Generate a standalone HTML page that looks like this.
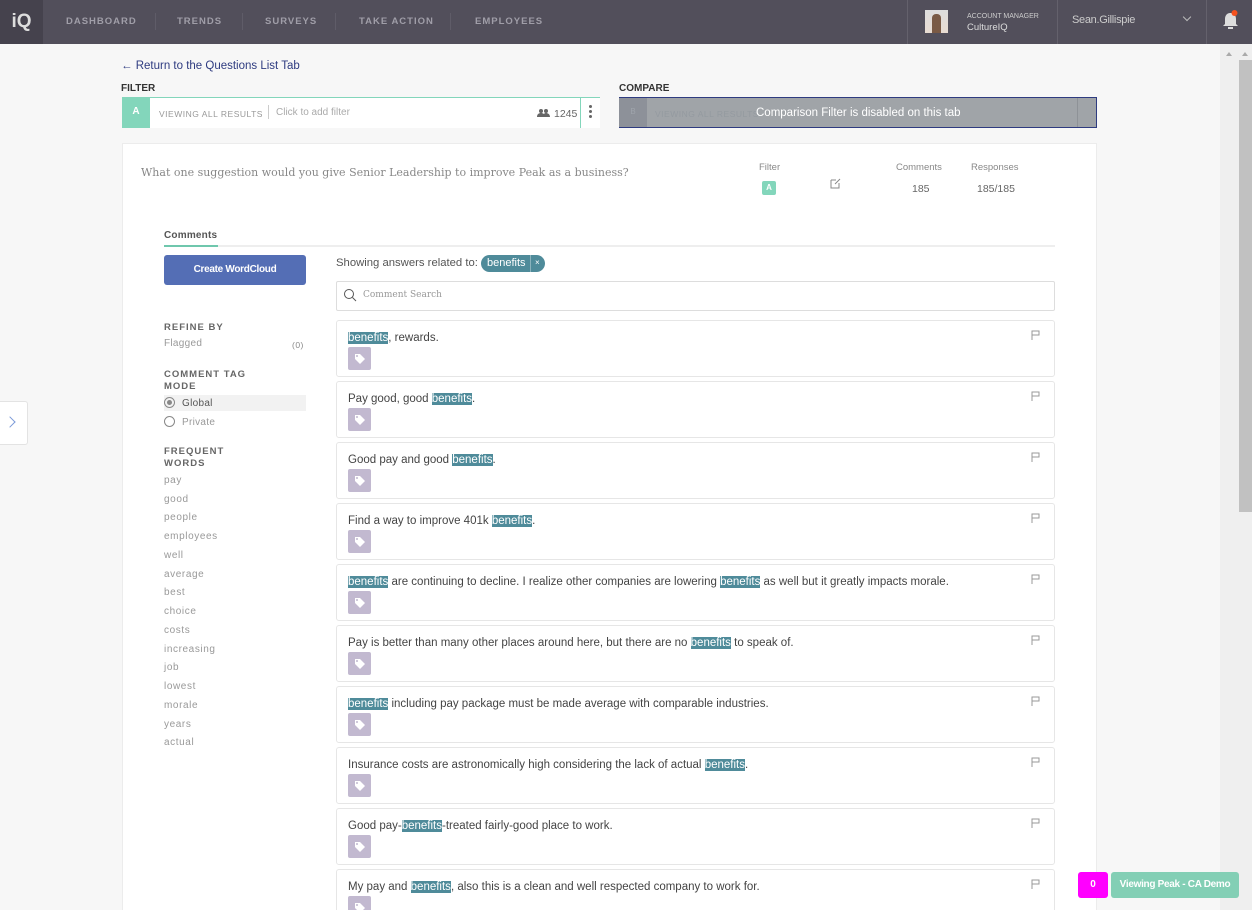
<!DOCTYPE html>
<html style="width:1252px;height:910px;overflow:hidden"><head><meta charset="utf-8"><style>
*{box-sizing:border-box;margin:0;padding:0}
body{width:1252px;height:910px;overflow:hidden;background:#f7f7f7;font-family:"Liberation Sans",sans-serif;position:relative;color:#444}
.abs{position:absolute}
.nav{left:0;top:0;width:1252px;height:44px;background:#524f5b}
.logo{left:0;top:0;width:43px;height:44px;background:#45424d;color:#ddd;font-weight:bold;font-size:19px;line-height:44px;text-align:center}
.nv{top:1px;height:44px;line-height:42px;font-size:9.5px;letter-spacing:1px;color:#a09ea8;font-weight:bold}
.sep{top:13px;width:1px;height:17px;background:#5f5c68}
.vsep{top:0;width:1px;height:44px;background:#64616c}
.card{background:#fff;border:1px solid #e6e6e6;border-radius:3px}
.hl{background:#4f8b9a;color:#fff}
.tag{width:23px;height:23px;background:#c2b9d0;border-radius:2px}
.fw{font-size:10px;color:#999;letter-spacing:.6px;left:164px}
</style></head><body>
<div class="abs nav"></div>
<div class="abs logo">iQ</div>
<div class="abs nv" style="left:66px">DASHBOARD</div>
<div class="abs sep" style="left:155px"></div>
<div class="abs nv" style="left:177px">TRENDS</div>
<div class="abs sep" style="left:242px"></div>
<div class="abs nv" style="left:265px">SURVEYS</div>
<div class="abs sep" style="left:335px"></div>
<div class="abs nv" style="left:359px">TAKE ACTION</div>
<div class="abs sep" style="left:450px"></div>
<div class="abs nv" style="left:475px">EMPLOYEES</div>
<div class="abs vsep" style="left:907px"></div>
<div class="abs" style="left:925px;top:10px;width:23px;height:23px;background:linear-gradient(#ddd,#e8dcd2);"><div style="margin:4px auto 0;width:9px;height:19px;background:#7a5a45;border-radius:4px 4px 0 0"></div></div>
<div class="abs" style="left:967px;top:13px;font-size:7px;color:#ccc">ACCOUNT MANAGER</div>
<div class="abs" style="left:967px;top:22px;font-size:9.5px;color:#ddd">CultureIQ</div>
<div class="abs vsep" style="left:1057px"></div>
<div class="abs" style="left:1072px;top:14px;font-size:11px;color:#ccc;letter-spacing:-.3px">Sean.Gillispie</div>
<div class="abs" style="left:1184px;top:14px;width:6px;height:6px;border-right:1px solid #bbb;border-bottom:1px solid #bbb;transform:rotate(45deg)"></div>
<div class="abs vsep" style="left:1206px"></div>
<svg class="abs" style="left:1221px;top:10px" width="20" height="22" viewBox="0 0 20 22"><path d="M9 3c-3 0-5 2.5-5 6v5l-2 2h15l-2-2V9c0-3.5-2-6-5-6z" fill="#ddd"/><rect x="7" y="17" width="5" height="2" fill="#ddd"/><circle cx="13.5" cy="3" r="3" fill="#f4511e"/></svg>
<div class="abs" style="left:1220px;top:44px;width:32px;height:866px;background:#efefef"></div>
<div class="abs" style="left:1239px;top:60px;width:13px;height:452px;background:#c1c1c1"></div>
<div class="abs" style="left:1226px;top:49px;border:3px solid transparent;border-bottom:4px solid #aaa"></div>
<div class="abs" style="left:1242px;top:49px;border:3px solid transparent;border-bottom:4px solid #aaa"></div>

<div class="abs" style="left:121px;top:60px;font-size:11.5px;color:#2e3b80">&#8592; Return to the Questions List Tab</div>
<div class="abs" style="left:121px;top:83px;font-size:10px;font-weight:bold;color:#333">FILTER</div>
<div class="abs" style="left:122px;top:97px;width:478px;height:31px;background:#fff;border-top:1px solid #83d6bb"></div>
<div class="abs" style="left:122px;top:97px;width:28px;height:31px;background:#83d6bb;color:#fff;font-size:10px;font-weight:bold;text-align:center;line-height:30px">A</div>
<div class="abs" style="left:159px;top:109px;font-size:8.5px;color:#999;letter-spacing:.5px">VIEWING ALL RESULTS</div>
<div class="abs" style="left:268px;top:105px;width:1px;height:14px;background:#ccc"></div>
<div class="abs" style="left:276px;top:107px;font-size:10px;color:#aaa">Click to add filter</div>
<svg class="abs" style="left:537px;top:109px" width="13" height="8" viewBox="0 0 13 8"><circle cx="4" cy="2" r="2" fill="#666"/><circle cx="9" cy="2" r="2" fill="#666"/><path d="M0 8c0-3 2-4 4-4s4 1 4 4zM6 8c0-3 1.5-4 3-4s4 1 4 4z" fill="#666"/></svg>
<div class="abs" style="left:554px;top:108px;font-size:10.5px;color:#666">1245</div>
<div class="abs" style="left:580px;top:97px;width:1px;height:31px;background:#83d6bb"></div>
<div class="abs" style="left:589px;top:105px;width:3px;height:3px;border-radius:50%;background:#666;box-shadow:0 5px 0 #666,0 10px 0 #666"></div>

<div class="abs" style="left:619px;top:83px;font-size:10px;font-weight:bold;color:#333">COMPARE</div>
<div class="abs" style="left:619px;top:97px;width:478px;height:31px;background:#a0a4a8;border:1px solid #2e3b80;border-left:none"></div>
<div class="abs" style="left:619px;top:98px;width:28px;height:29px;background:#8d9199;color:#9fa4ab;font-size:8px;text-align:center;line-height:28px">B</div>
<div class="abs" style="left:655px;top:109px;font-size:8.5px;color:#949aa0;letter-spacing:.5px">VIEWING ALL RESULTS</div>
<div class="abs" style="left:756px;top:107px;font-size:11.5px;color:#fff">Comparison Filter is disabled on this tab</div>
<div class="abs" style="left:1077px;top:98px;width:1px;height:29px;background:#8e9297"></div>

<div class="abs" style="left:122px;top:143px;width:975px;height:767px;background:#fff;border:1px solid #ececec;border-bottom:none"></div>
<div class="abs" style="left:141px;top:166px;font-family:'DejaVu Serif',serif;font-size:11px;color:#888">What one suggestion would you give Senior Leadership to improve Peak as a business?</div>
<div class="abs" style="left:759px;top:162px;font-size:9.5px;color:#888">Filter</div>
<div class="abs" style="left:762px;top:181px;width:14px;height:14px;background:#83d6bb;border-radius:2px;color:#fff;font-size:8px;font-weight:bold;text-align:center;line-height:14px">A</div>
<svg class="abs" style="left:830px;top:178px" width="11" height="11" viewBox="0 0 11 11"><path d="M1 2h5M1 2v8h8V5M5 6l5-5" stroke="#888" fill="none" stroke-width="1"/></svg>
<div class="abs" style="left:896px;top:162px;font-size:9.5px;color:#888">Comments</div>
<div class="abs" style="left:912px;top:183px;font-size:10.5px;color:#666">185</div>
<div class="abs" style="left:971px;top:162px;font-size:9.5px;color:#888">Responses</div>
<div class="abs" style="left:977px;top:183px;font-size:10.5px;color:#666">185/185</div>

<div class="abs" style="left:164px;top:230px;font-size:10px;color:#555;font-weight:bold;letter-spacing:.2px">Comments</div>
<div class="abs" style="left:164px;top:245px;width:891px;height:2px;background:#eee"></div>
<div class="abs" style="left:164px;top:245px;width:54px;height:2px;background:#6fc7ad"></div>
<div class="abs" style="left:164px;top:255px;width:142px;height:30px;background:#546eb5;border-radius:3px;color:#fff;font-size:10px;font-weight:bold;text-align:center;line-height:30px;letter-spacing:-.3px">Create WordCloud</div>
<div class="abs" style="left:164px;top:322px;font-size:9.5px;color:#666;font-weight:bold;letter-spacing:1px">REFINE BY</div>
<div class="abs" style="left:164px;top:338px;font-size:10px;color:#999;letter-spacing:.3px">Flagged</div>
<div class="abs" style="left:292px;top:340px;font-size:8.5px;color:#888;letter-spacing:.5px">(0)</div>
<div class="abs" style="left:164px;top:369px;font-size:9.5px;color:#666;font-weight:bold;letter-spacing:1px;line-height:12px">COMMENT TAG<br>MODE</div>
<div class="abs" style="left:164px;top:395px;width:142px;height:16px;background:#f2f2f2"></div>
<div class="abs" style="left:164px;top:397px;width:11px;height:11px;border:1px solid #888;border-radius:50%"><div style="margin:2px;width:5px;height:5px;border-radius:50%;background:#888"></div></div>
<div class="abs" style="left:182px;top:398px;font-size:10px;color:#555;letter-spacing:.3px">Global</div>
<div class="abs" style="left:164px;top:416px;width:11px;height:11px;border:1px solid #888;border-radius:50%"></div>
<div class="abs" style="left:182px;top:417px;font-size:10px;color:#999;letter-spacing:.3px">Private</div>
<div class="abs" style="left:164px;top:446px;font-size:9.5px;color:#666;font-weight:bold;letter-spacing:1px;line-height:12px">FREQUENT<br>WORDS</div>
<div class="abs fw" style="top:475px">pay</div>
<div class="abs fw" style="top:494px">good</div>
<div class="abs fw" style="top:512px">people</div>
<div class="abs fw" style="top:531px">employees</div>
<div class="abs fw" style="top:550px">well</div>
<div class="abs fw" style="top:569px">average</div>
<div class="abs fw" style="top:587px">best</div>
<div class="abs fw" style="top:606px">choice</div>
<div class="abs fw" style="top:625px">costs</div>
<div class="abs fw" style="top:644px">increasing</div>
<div class="abs fw" style="top:662px">job</div>
<div class="abs fw" style="top:681px">lowest</div>
<div class="abs fw" style="top:700px">morale</div>
<div class="abs fw" style="top:719px">years</div>
<div class="abs fw" style="top:737px">actual</div>

<div class="abs" style="left:336px;top:257px;font-size:11.3px;color:#555">Showing answers related to:</div>
<div class="abs" style="left:481px;top:255px;width:64px;height:17px;background:#4f8b9a;border-radius:9px;color:#fff;font-size:11px;line-height:16px;padding-left:6px">benefits<span style="position:absolute;left:49px;top:0;height:17px;border-left:1px solid #8bb3bd;padding-left:4px;font-size:8px">×</span></div>
<div class="abs" style="left:336px;top:281px;width:719px;height:30px;border:1px solid #ddd;border-radius:2px;background:#fff"></div>
<svg class="abs" style="left:343px;top:288px" width="14" height="14" viewBox="0 0 14 14"><circle cx="6" cy="6" r="4.5" stroke="#555" fill="none"/><path d="M9.5 9.5l3.5 3.5" stroke="#555"/></svg>
<div class="abs" style="left:363px;top:290px;font-size:9px;color:#999;font-family:'DejaVu Serif',serif">Comment Search</div>

<div id="cards"></div>
<script>
var t=[
'<b class="hl">benefits</b>, rewards.',
'Pay good, good <b class="hl">benefits</b>.',
'Good pay and good <b class="hl">benefits</b>.',
'Find a way to improve 401k <b class="hl">benefits</b>.',
'<b class="hl">benefits</b> are continuing to decline. I realize other companies are lowering <b class="hl">benefits</b> as well but it greatly impacts morale.',
'Pay is better than many other places around here, but there are no <b class="hl">benefits</b> to speak of.',
'<b class="hl">benefits</b> including pay package must be made average with comparable industries.',
'Insurance costs are astronomically high considering the lack of actual <b class="hl">benefits</b>.',
'Good pay-<b class="hl">benefits</b>-treated fairly-good place to work.',
'My pay and <b class="hl">benefits</b>, also this is a clean and well respected company to work for.'];
var h='';
for(var i=0;i<t.length;i++){var y=320+i*61;
h+='<div class="abs card" style="left:336px;top:'+y+'px;width:719px;height:57px"></div>'+
'<div class="abs" style="left:348px;top:'+(y+11)+'px;font-size:11.5px;color:#444;white-space:nowrap;line-height:14px">'+t[i].replace(/<b /g,'<span ').replace(/<\/b>/g,'</span>')+'</div>'+
'<div class="abs tag" style="left:348px;top:'+(y+27)+'px"><svg width="23" height="23" viewBox="0 0 23 23"><path d="M7 7h5l5 5-5 5-5-5z" fill="#fff"/><circle cx="9" cy="9" r="1" fill="#c2b9d0"/></svg></div>'+
'<svg class="abs" style="left:1031px;top:'+(y+10)+'px" width="9" height="10" viewBox="0 0 9 10"><path d="M1 10V1h7v4H1" stroke="#999" fill="none"/></svg>';}
document.getElementById('cards').innerHTML=h;
</script>

<div class="abs" style="left:0;top:401px;width:28px;height:44px;background:#fff;border:1px solid #e3e3e3;border-left:none;border-radius:0 3px 3px 0"></div>
<div class="abs" style="left:6px;top:418px;width:8px;height:8px;border-right:1.5px solid #7b9ad8;border-top:1.5px solid #7b9ad8;transform:rotate(45deg)"></div>

<div class="abs" style="left:1078px;top:872px;width:30px;height:26px;background:#f0f;border-radius:3px;color:#fff;font-size:10px;font-weight:bold;text-align:center;line-height:26px">0</div>
<div class="abs" style="left:1111px;top:872px;width:128px;height:26px;background:#83cfb5;border-radius:3px;color:#fff;font-size:10px;font-weight:bold;text-align:center;line-height:26px;letter-spacing:-.3px">Viewing Peak - CA Demo</div>
</body></html>
